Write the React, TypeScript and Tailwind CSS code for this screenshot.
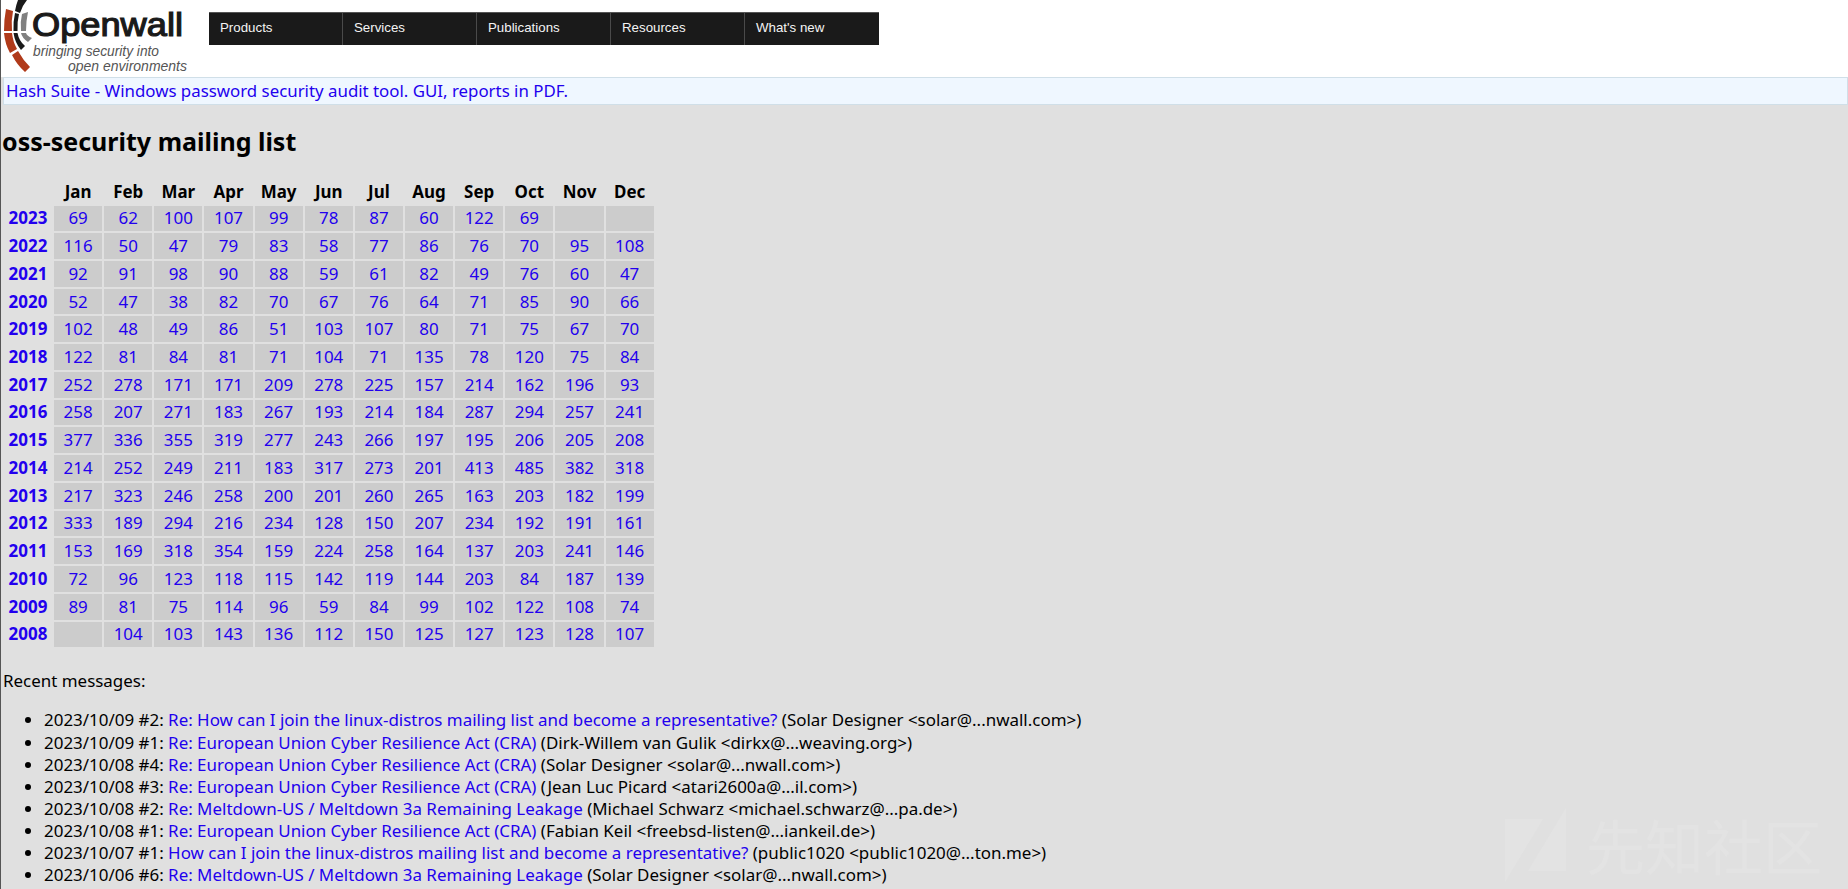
const months = ["Jan","Feb","Mar","Apr","May","Jun","Jul","Aug","Sep","Oct","Nov","Dec"];
const rows: [number, (number | null)[]][] = [
[2023,[69,62,100,107,99,78,87,60,122,69,null,null]],
[2022,[116,50,47,79,83,58,77,86,76,70,95,108]],
[2021,[92,91,98,90,88,59,61,82,49,76,60,47]],
[2020,[52,47,38,82,70,67,76,64,71,85,90,66]],
[2019,[102,48,49,86,51,103,107,80,71,75,67,70]],
[2018,[122,81,84,81,71,104,71,135,78,120,75,84]],
[2017,[252,278,171,171,209,278,225,157,214,162,196,93]],
[2016,[258,207,271,183,267,193,214,184,287,294,257,241]],
[2015,[377,336,355,319,277,243,266,197,195,206,205,208]],
[2014,[214,252,249,211,183,317,273,201,413,485,382,318]],
[2013,[217,323,246,258,200,201,260,265,163,203,182,199]],
[2012,[333,189,294,216,234,128,150,207,234,192,191,161]],
[2011,[153,169,318,354,159,224,258,164,137,203,241,146]],
[2010,[72,96,123,118,115,142,119,144,203,84,187,139]],
[2009,[89,81,75,114,96,59,84,99,102,122,108,74]],
[2008,[null,104,103,143,136,112,150,125,127,123,128,107]],
];
const msgs = [
["2023/10/09 #2:","Re: How can I join the linux-distros mailing list and become a representative?","(Solar Designer <solar@...nwall.com>)"],
["2023/10/09 #1:","Re: European Union Cyber Resilience Act (CRA)","(Dirk-Willem van Gulik <dirkx@...weaving.org>)"],
["2023/10/08 #4:","Re: European Union Cyber Resilience Act (CRA)","(Solar Designer <solar@...nwall.com>)"],
["2023/10/08 #3:","Re: European Union Cyber Resilience Act (CRA)","(Jean Luc Picard <atari2600a@...il.com>)"],
["2023/10/08 #2:","Re: Meltdown-US / Meltdown 3a Remaining Leakage","(Michael Schwarz <michael.schwarz@...pa.de>)"],
["2023/10/08 #1:","Re: European Union Cyber Resilience Act (CRA)","(Fabian Keil <freebsd-listen@...iankeil.de>)"],
["2023/10/07 #1:","How can I join the linux-distros mailing list and become a representative?","(public1020 <public1020@...ton.me>)"],
["2023/10/06 #6:","Re: Meltdown-US / Meltdown 3a Remaining Leakage","(Solar Designer <solar@...nwall.com>)"],
];
const nav = ["Products","Services","Publications","Resources","What's new"];
export default function App() {
  return (
    <div className="relative h-[889px] overflow-hidden bg-[#e0e0e0] text-[16.95px] leading-[22.14px] text-black" style={{fontFamily:'"Noto Sans","Open Sans",sans-serif'}}>
      <div className="flex h-[77px] bg-white">
        <svg width="200" height="77" viewBox="0 0 200 77" className="shrink-0">
          <path d="M6 9 L13 11 Q11 21 12 31 L4 31 Q4 19 6 9 Z" fill="#b03a1a"/>
          <path d="M4 33 L12 33 Q13 42 17 49 L10 53 Q5 44 4 33 Z" fill="#b03a1a"/>
          <path d="M12 55 L18 51 Q23 60 30 67 L25 72 Q17 65 12 55 Z" fill="#b03a1a"/>
          <path d="M18 0 L27 0 Q22 6 20 13 L15 11 Q16 5 18 0 Z" fill="#1a1a1a"/>
          <path d="M15 13 L19 14 Q17 22 17.500 31 L13.500 31 Q13 22 15 13 Z" fill="#1a1a1a"/>
          <path d="M13.500 33 L17.500 33 Q19 41 25 46 L21 50 Q15 43 13.500 33 Z" fill="#1a1a1a"/>
          <path d="M22 14 L28 12 Q26 21 26 31 L21 31 Q20 22 22 14 Z" fill="#808080"/>
          <path d="M21 33 L26 33 Q27 36 32 38 L28 42 Q22 38 21 33 Z" fill="#808080"/>
          <text x="32" y="36" fontFamily="Liberation Sans" fontSize="33" textLength="151" lengthAdjust="spacingAndGlyphs" fill="#1a1a1a" stroke="#1a1a1a" strokeWidth="1.2">Openwall</text>
          <text x="33" y="56" fontFamily="Liberation Sans" fontSize="14" fontStyle="italic" textLength="126" lengthAdjust="spacingAndGlyphs" fill="#555">bringing security into</text>
          <text x="68" y="71" fontFamily="Liberation Sans" fontSize="14" fontStyle="italic" textLength="119" lengthAdjust="spacingAndGlyphs" fill="#555">open environments</text>
        </svg>
        <div className="ml-[9px] mt-[12px] flex h-[33px] self-start border-t border-[#555] bg-[#1a1a1a]" style={{fontFamily:'"Liberation Sans",sans-serif'}}>
          {nav.map((n,i)=>(
            <a key={n} className={`flex w-[134px] items-center pb-[2px] pl-[11px] text-[13.3px] leading-none text-[#f4f4f4] ${i<4?"border-r border-[#4a4a4a]":""}`}>{n}</a>
          ))}
        </div>
      </div>
      <div className="ml-[3px] flex h-[28px] items-center border border-[#d0dfe8] bg-[#eff7ff] pl-[2px] text-[16.85px]">
        <a className="text-[#2200ee]">Hash Suite - Windows password security audit tool. GUI, reports in PDF.</a>
      </div>
      <h2 className="ml-[2px] mt-[19px] text-[25px] font-bold leading-[34px]">oss-security mailing list</h2>
      <table className="ml-[2px] mt-[21px] border-separate border-spacing-[2px] text-center">
        <thead>
          <tr><td></td>{months.map(m=><th key={m} className="h-[22.5px] w-[48.15px] p-0 font-bold">{m}</th>)}</tr>
        </thead>
        <tbody>
          {rows.map(([y,vals])=>(
            <tr key={y}>
              <th className="h-[25.74px] w-[48px] p-0 font-bold text-[#2200ee]">{y}</th>
              {vals.map((v,i)=><td key={i} className="h-[25.74px] w-[48.15px] bg-[#cccccc] p-0 text-[#2200ee]">{v}</td>)}
            </tr>
          ))}
        </tbody>
      </table>
      <p className="ml-[3px] mt-[21px]">Recent messages:</p>
      <ul className="mt-[17px] list-disc pl-[44px]">
        {msgs.map((m,i)=>(
          <li key={i}>{m[0]} <a className="text-[#2200ee]">{m[1]}</a> {m[2]}</li>
        ))}
      </ul>
      <div className="absolute left-0 top-0 h-full w-px bg-[#555]" />
      <div className="absolute left-[1505px] top-[808px] flex items-center text-[#e3e3e3]">
        <svg width="62" height="74" viewBox="0 0 62 74" fill="currentColor">
          <path d="M0 11 H38 L0 74 Z M61 0 V63 H23 Z" />
        </svg>
        <span className="ml-[19px] text-[59px] leading-[72px]" style={{fontFamily:'"Noto Sans CJK SC",sans-serif'}}>先知社区</span>
      </div>
    </div>
  );
}
